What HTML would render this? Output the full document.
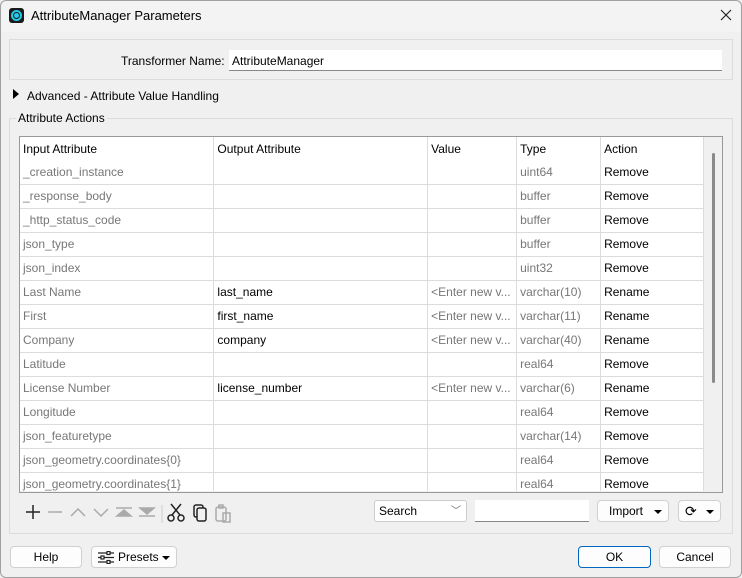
<!DOCTYPE html>
<html><head><style>
*{box-sizing:border-box;margin:0;padding:0}
body{width:742px;height:578px;background:#f0f0f0;font-family:"Liberation Sans",sans-serif;font-size:12px;color:#000;position:relative;overflow:hidden}
.a{position:absolute}
.win{left:0;top:0;width:742px;height:578px;border:1px solid #a0a0a0;border-radius:6px;background:#f0f0f0}
.title{left:1px;top:1px;width:740px;height:31px;background:#f3f3f3;border-radius:6px 6px 0 0}
.btn{position:absolute;background:#fdfdfd;border:1px solid #d0d0d0;border-radius:4px;text-align:center;line-height:20px;font-size:12px}
.clip{position:absolute;left:20px;top:137px;width:684px;height:354px;overflow:hidden;background:#fff}
table{border-collapse:collapse;position:absolute;left:0;top:0;width:684px;background:#fff}
td{height:24px;border-right:1px solid #dcdcdc;border-bottom:1px solid #dcdcdc;padding:0 3px;font-size:12px;white-space:nowrap;overflow:hidden}
td.g{color:#777}
tr.h td{border-bottom:none;height:23px}
</style></head><body>
<div class="a win"></div>
<div class="a title"></div>
<div class="a" style="left:9px;top:8px;width:15px;height:15px;background:#1a1a1a;border-radius:3px"></div>
<div class="a" style="left:11px;top:10px;width:11px;height:11px;border:2px solid #25c8e8;border-radius:50%"></div>
<div class="a" style="left:14px;top:13px;width:5px;height:5px;background:#25c8e8;border-radius:50%"></div>
<div class="a" style="left:31px;top:8px;font-size:13px">AttributeManager Parameters</div>
<svg class="a" style="left:720px;top:9px" width="12" height="12" stroke="#222" stroke-width="1.2"><path d="M1 1l10 10M11 1L1 11"/></svg>
<div class="a" style="left:9px;top:39px;width:724px;height:41px;border:1px solid #dcdcdc"></div>
<div class="a" style="left:121px;top:54px">Transformer Name:</div>
<div class="a" style="left:229px;top:50px;width:493px;height:21px;background:#fff;border-bottom:1px solid #888;padding:4px 3px">AttributeManager</div>
<div class="a" style="left:13px;top:89px;width:0;height:0;border-left:6px solid #000;border-top:5px solid transparent;border-bottom:5px solid transparent"></div>
<div class="a" style="left:27px;top:89px">Advanced - Attribute Value Handling</div>
<div class="a" style="left:9px;top:118px;width:724px;height:416px;border:1px solid #dcdcdc"></div>
<div class="a" style="left:16px;top:111px;background:#f0f0f0;padding:0 2px">Attribute Actions</div>
<div class="a" style="left:19px;top:136px;width:704px;height:357px;border:1px solid #999;background:#f0f0f0"></div>
<div class="a" style="left:712px;top:153px;width:3px;height:230px;background:#8a8a8a;border-radius:2px"></div>
<div class="clip">
<table>
<colgroup><col style="width:194px"><col style="width:214px"><col style="width:89px"><col style="width:84px"><col style="width:103px"></colgroup>
<tr class="h"><td>Input Attribute</td><td>Output Attribute</td><td>Value</td><td>Type</td><td>Action</td></tr>
<tr><td class="g">_creation_instance</td><td></td><td></td><td class="g">uint64</td><td>Remove</td></tr>
<tr><td class="g">_response_body</td><td></td><td></td><td class="g">buffer</td><td>Remove</td></tr>
<tr><td class="g">_http_status_code</td><td></td><td></td><td class="g">buffer</td><td>Remove</td></tr>
<tr><td class="g">json_type</td><td></td><td></td><td class="g">buffer</td><td>Remove</td></tr>
<tr><td class="g">json_index</td><td></td><td></td><td class="g">uint32</td><td>Remove</td></tr>
<tr><td class="g">Last Name</td><td>last_name</td><td class="g">&lt;Enter new v...</td><td class="g">varchar(10)</td><td>Rename</td></tr>
<tr><td class="g">First</td><td>first_name</td><td class="g">&lt;Enter new v...</td><td class="g">varchar(11)</td><td>Rename</td></tr>
<tr><td class="g">Company</td><td>company</td><td class="g">&lt;Enter new v...</td><td class="g">varchar(40)</td><td>Rename</td></tr>
<tr><td class="g">Latitude</td><td></td><td></td><td class="g">real64</td><td>Remove</td></tr>
<tr><td class="g">License Number</td><td>license_number</td><td class="g">&lt;Enter new v...</td><td class="g">varchar(6)</td><td>Rename</td></tr>
<tr><td class="g">Longitude</td><td></td><td></td><td class="g">real64</td><td>Remove</td></tr>
<tr><td class="g">json_featuretype</td><td></td><td></td><td class="g">varchar(14)</td><td>Remove</td></tr>
<tr><td class="g">json_geometry.coordinates{0}</td><td></td><td></td><td class="g">real64</td><td>Remove</td></tr>
<tr><td class="g">json_geometry.coordinates{1}</td><td></td><td></td><td class="g">real64</td><td>Remove</td></tr>
</table>
</div>
<svg class="a" style="left:22px;top:500px" width="220" height="24" fill="none" stroke-width="1.5">
<path d="M4 12h14M11 5v14" stroke="#222"/>
<path d="M26 12h14" stroke="#aaa"/>
<path d="M49 16l7-7 7 7" stroke="#aaa"/>
<path d="M72 9l7 7 7-7" stroke="#aaa"/>
<path d="M94 8h16" stroke="#aaa"/><path d="M95 16l7-6 7 6z" fill="#aaa" stroke="#aaa"/>
<path d="M117 16h16" stroke="#aaa"/><path d="M118 8l7 6 7-6z" fill="#aaa" stroke="#aaa"/>
<path d="M140 5v18" stroke="#ccc" stroke-width="1"/>
<path d="M149 4l9 11M159 4l-9 11" stroke="#222"/><circle cx="149" cy="18" r="3" stroke="#222"/><circle cx="159" cy="18" r="3" stroke="#222"/>
<rect x="172" y="5" width="9" height="12" rx="2" stroke="#222"/><rect x="175" y="8" width="9" height="13" rx="2" stroke="#222" fill="#f0f0f0"/>
<rect x="194" y="7" width="10" height="14" rx="2" stroke="#aaa"/><rect x="197" y="5" width="4" height="3" stroke="#aaa"/><path d="M201 13h7v9h-7z" stroke="#aaa"/>
</svg>
<div class="a" style="left:374px;top:500px;width:93px;height:22px;background:#fff;border:1px solid #ccc;border-radius:3px;padding:3px 4px">Search<span style="position:absolute;right:5px;top:1px;color:#666;font-size:10px">﹀</span></div>
<div class="a" style="left:475px;top:500px;width:114px;height:22px;background:#fff;border-bottom:1px solid #888"></div>
<div class="btn" style="left:597px;top:500px;width:72px;height:22px;text-align:left;padding-left:11px">Import<span style="position:absolute;right:6px;top:9px;border-left:4px solid transparent;border-right:4px solid transparent;border-top:4px solid #000"></span></div>
<div class="btn" style="left:678px;top:500px;width:43px;height:22px;text-align:left;padding-left:6px;font-size:14px">⟳<span style="position:absolute;right:6px;top:9px;border-left:4px solid transparent;border-right:4px solid transparent;border-top:4px solid #000"></span></div>
<div class="btn" style="left:10px;top:546px;width:72px;height:22px">Help</div>
<div class="btn" style="left:91px;top:546px;width:86px;height:22px;text-align:left;padding-left:26px">Presets<span style="position:absolute;right:6px;top:9px;border-left:4px solid transparent;border-right:4px solid transparent;border-top:4px solid #000"></span>
<svg style="position:absolute;left:6px;top:4px" width="16" height="13" stroke="#222" stroke-width="1.2" fill="#fff"><path d="M0 2h16M0 6.5h16M0 11h16"/><rect x="9" y="0.5" width="3" height="3"/><rect x="3" y="5" width="3" height="3"/><rect x="9" y="9.5" width="3" height="3"/></svg></div>
<div class="btn" style="left:578px;top:546px;width:73px;height:22px;border:1px solid #0067c0">OK</div>
<div class="btn" style="left:659px;top:546px;width:72px;height:22px">Cancel</div>
</body></html>
